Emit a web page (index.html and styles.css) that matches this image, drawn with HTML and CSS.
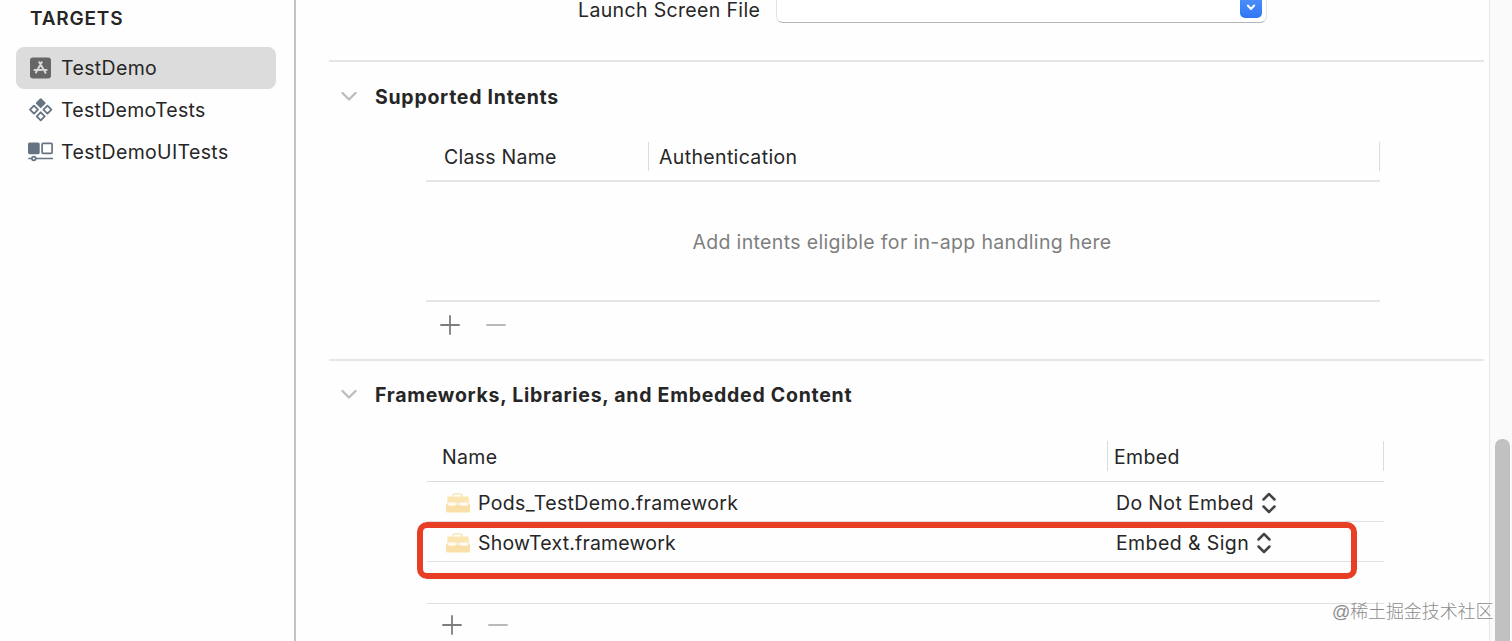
FILE: index.html
```html
<!DOCTYPE html>
<html lang="en">
<head>
    <meta charset="UTF-8">
    <meta name="viewport" content="width=device-width, initial-scale=1.0">
    <title>TestDemo - General</title>
    <link rel="stylesheet" href="styles.css">
</head>
<body>
    <svg class="sprites" width="0" height="0">
        <symbol id="chevron" viewBox="0 0 16 10">
            <path d="M1.5 1L8 7.5 14.5 1" fill="none" stroke="#bcbcbc" stroke-width="2.3" stroke-linecap="round" stroke-linejoin="round"/>
        </symbol>
        <symbol id="plus" viewBox="0 0 20 20">
            <path d="M1 10h18M10 1v18" fill="none" stroke="#7d7d7d" stroke-width="1.8" stroke-linecap="round"/>
        </symbol>
        <symbol id="minus" viewBox="0 0 20 20">
            <path d="M1 10h18" fill="none" stroke="#b9b9b9" stroke-width="1.8" stroke-linecap="round"/>
        </symbol>
        <symbol id="updown" viewBox="0 0 14 22">
            <path d="M1.5 7.5L7 2l5.5 5.5M1.5 14.5L7 20l5.5-5.5" fill="none" stroke="#444" stroke-width="2.5" stroke-linecap="round" stroke-linejoin="round"/>
        </symbol>
        <symbol id="toolbox" viewBox="0 0 24 20">
            <path d="M7 4V2.4Q7 1 8.4 1h6.2Q16 1 16 2.4V4" fill="none" stroke="#f9e6b8" stroke-width="1.6"/>
            <path d="M1.5 3.5h21L23 11.5H1z" fill="#fbe6b1"/>
            <path d="M0 11h24v7q0 1.5-1.5 1.5h-21Q0 19.5 0 18z" fill="#f9e0a8"/>
            <path d="M1 11h22" stroke="#fdf3d9" stroke-width="1.6"/>
            <path d="M3.5 11h5M15.5 11h5" stroke="#fffaf0" stroke-width="3.6" stroke-linecap="round"/>
        </symbol>
    </svg>

    <div class="window">
        <aside class="sidebar">
            <h2 class="sidebar-title">TARGETS</h2>
            <ul class="targets">
                <li class="target selected">
                    <svg width="26" height="24" viewBox="0 0 26 24">
                        <rect x="3" y="1.500" width="21" height="21" rx="3" fill="#666"/>
                        <path d="M14.7 6.2L9 16.4M12.3 6.2l6.2 10.6M7.500 14h7.2M17.7 14h1.900" fill="none" stroke="#d8d8d8" stroke-width="2" stroke-linecap="round"/>
                    </svg>
                    <span>TestDemo</span>
                </li>
                <li class="target">
                    <svg width="26" height="24" viewBox="0 0 26 24">
                        <g fill="none" stroke="#667382" stroke-width="1.8" stroke-linejoin="round">
                            <path d="M13.7 1.2l4 4-4 4-4-4z" fill="#667382"/>
                            <path d="M7 7.7l4 4-4 4-4-4z"/>
                            <path d="M20.4 7.7l4 4-4 4-4-4z"/>
                            <path d="M13.7 14.3l4 4-4 4-4-4z"/>
                        </g>
                    </svg>
                    <span class="name-tests">TestDemoTests</span>
                </li>
                <li class="target">
                    <svg width="26" height="24" viewBox="0 0 26 24">
                        <rect x="1" y="2.5" width="11.7" height="11.7" rx="1.6" fill="#667382"/>
                        <g fill="none" stroke="#667382" stroke-width="1.7">
                            <rect x="15.1" y="3.3" width="10" height="10" rx="1"/>
                            <path d="M1.3 18.5h3.3M9 18.5h17"/>
                            <circle cx="6.8" cy="18.5" r="1.9"/>
                        </g>
                    </svg>
                    <span>TestDemoUITests</span>
                </li>
            </ul>
        </aside>

        <main class="editor">
            <div class="setting">
                <label class="setting-label">Launch Screen File</label>
                <div class="combo">
                    <span class="combo-button">
                        <svg width="10" height="7" viewBox="0 0 10 7"><path d="M1.8 1.5L5 5l3.2-3.5" fill="none" stroke="#fff" stroke-width="1.9" stroke-linecap="round" stroke-linejoin="round"/></svg>
                    </span>
                </div>
            </div>

            <section class="section intents">
                <h3 class="section-title">
                    <svg width="16" height="10"><use href="#chevron"/></svg>
                    <span>Supported Intents</span>
                </h3>
                <div class="table">
                    <div class="table-head">
                        <span class="col-class">Class Name</span>
                        <span class="col-auth">Authentication</span>
                    </div>
                    <div class="table-empty">Add intents eligible for in-app handling here</div>
                    <div class="table-actions">
                        <svg width="20" height="20"><use href="#plus"/></svg>
                        <svg width="20" height="20"><use href="#minus"/></svg>
                    </div>
                </div>
            </section>

            <section class="section frameworks">
                <h3 class="section-title">
                    <svg width="16" height="10"><use href="#chevron"/></svg>
                    <span>Frameworks, Libraries, and Embedded Content</span>
                </h3>
                <div class="table">
                    <div class="table-head">
                        <span class="col-name">Name</span>
                        <span class="col-embed">Embed</span>
                    </div>
                    <div class="table-row">
                        <span class="framework">
                            <svg width="24" height="20"><use href="#toolbox"/></svg>
                            <span>Pods_TestDemo.framework</span>
                        </span>
                        <span class="embed">
                            <span>Do Not Embed</span>
                            <svg width="14" height="22"><use href="#updown"/></svg>
                        </span>
                    </div>
                    <div class="table-row">
                        <span class="framework">
                            <svg width="24" height="20"><use href="#toolbox"/></svg>
                            <span class="name-showtext">ShowText.framework</span>
                        </span>
                        <span class="embed">
                            <span class="embed-sign">Embed &amp; Sign</span>
                            <svg width="14" height="22"><use href="#updown"/></svg>
                        </span>
                        <div class="marker"></div>
                    </div>
                    <div class="table-spacer"></div>
                    <div class="table-actions">
                        <svg width="20" height="20"><use href="#plus"/></svg>
                        <svg width="20" height="20"><use href="#minus"/></svg>
                    </div>
                </div>
            </section>
        </main>

        <div class="scrollbar">
            <div class="scrollbar-thumb"></div>
        </div>
        <div class="watermark">@稀土掘金技术社区</div>
    </div>
</body>
</html>
```
FILE: styles.css
```css
* {
    box-sizing: border-box;
}

body {
    margin: 0;
    overflow: hidden;
    background: #fefefe;
    color: #262626;
    font-family: Inter, "Liberation Sans", sans-serif;
    font-size: 19.5px;
    line-height: 24px;
    letter-spacing: 0.35px;
    white-space: nowrap;
}

svg {
    display: block;
    flex: none;
}

.window {
    position: relative;
    display: flex;
    height: 641px;
    overflow: hidden;
}

/* sidebar */
.sidebar {
    width: 296px;
    padding: 7px 18px 0 16px;
    border-right: 2px solid #c4c4c4;
    flex: none;
}

.sidebar-title {
    margin: 0 0 16px 14px;
    font-size: 19px;
    font-weight: 600;
    line-height: 24px;
    letter-spacing: 0.8px;
}

.targets {
    margin: 0;
    padding: 0;
    list-style: none;
}

.target {
    display: flex;
    align-items: center;
    gap: 8px;
    height: 42px;
    padding: 0 0 1px 11px;
    border-radius: 8px;
}

.target.selected {
    background: #dcdcdc;
}

.name-tests {
    letter-spacing: 0.27px;
}

/* editor */
.editor {
    flex: 1;
    min-width: 0;
    padding: 0 5px 0 33px;
}

.setting {
    display: flex;
    height: 60px;
    padding-left: 249px;
}

.setting-label {
    width: 198px;
    line-height: 20px;
}

.combo {
    display: flex;
    justify-content: flex-end;
    align-items: flex-end;
    width: 491px;
    height: 23px;
    padding: 0 4px 4px 0;
    border: 1px solid #e2e2e2;
    border-top: 0;
    border-bottom-color: #b5b5b5;
    border-radius: 0 0 7px 7px;
    background: #fff;
}

.combo-button {
    display: flex;
    justify-content: center;
    align-items: flex-end;
    width: 22px;
    height: 18px;
    padding-bottom: 7px;
    border-radius: 0 0 5px 5px;
    background: linear-gradient(#4a8df8, #2f76f6);
}

.section {
    border-top: 2px solid #e6e6e6;
}

.intents {
    height: 299px;
}

.section-title {
    display: flex;
    align-items: center;
    gap: 18px;
    height: 70px;
    margin: 0;
    padding: 0 0 1px 12px;
    font-size: 19.5px;
    font-weight: 700;
    letter-spacing: 0.73px;
}

.table-head {
    display: flex;
    align-items: center;
}

.table-head span {
    display: flex;
    align-items: center;
    border-right: 1px solid #dcdcdc;
}

.intents .table {
    width: 954px;
    margin-left: 97px;
}

.intents .table-head {
    height: 50px;
    border-bottom: 2px solid #e6e6e6;
}

.intents .table-head span {
    height: 29px;
    padding-top: 2px;
}

.intents .col-class {
    width: 223px;
    padding-left: 18px;
    letter-spacing: 0.25px;
}

.intents .col-auth {
    flex: 1;
    padding-left: 10px;
}

.table-empty {
    display: flex;
    justify-content: center;
    align-items: center;
    height: 120px;
    padding: 2px 2px 0 0;
    border-bottom: 2px solid #e6e6e6;
    color: #7e7e7e;
}

.table-actions {
    display: flex;
    align-items: center;
    gap: 26px;
    height: 46px;
    padding-left: 14px;
}

.frameworks .section-title {
    padding-bottom: 2px;
}

.frameworks .table {
    width: 957px;
    margin-left: 98px;
}

.frameworks .table-head {
    height: 51px;
    border-bottom: 1px solid #dcdcdc;
}

.frameworks .table-head span {
    height: 30px;
    padding-top: 2px;
}

.frameworks .col-name {
    width: 681px;
    padding-left: 15px;
}

.frameworks .col-embed {
    flex: 1;
    padding-left: 6px;
}

.frameworks .table-actions {
    height: 42px;
    padding-left: 15px;
}

.table-row {
    position: relative;
    display: flex;
    align-items: center;
    height: 40px;
    padding-top: 2px;
    border-bottom: 1px solid #e0e0e0;
}

.framework,
.embed {
    display: flex;
    align-items: center;
    gap: 8px;
}

.framework {
    width: 689px;
    padding-left: 19px;
}

.name-showtext {
    letter-spacing: 0.18px;
}

.embed-sign {
    letter-spacing: 0.4px;
}

/* red frame drawn round the embedded framework */
.marker {
    position: absolute;
    top: 0;
    left: -10px;
    width: 940px;
    height: 57px;
    border: 6px solid #e83e25;
    border-radius: 10px;
}

.table-spacer {
    height: 42px;
    border-bottom: 1px solid #e0e0e0;
}

/* scrollbar */
.scrollbar {
    width: 23px;
    padding: 439px 2px 0 5px;
    border-left: 1px solid #e6e6e6;
    background: #fafafa;
    flex: none;
}

.scrollbar-thumb {
    height: 220px;
    border-radius: 7px;
    background: #c1c1c1;
}

.watermark {
    position: absolute;
    top: 600px;
    left: 1332px;
    color: #8c8c8c;
    font-family: "Liberation Sans", "Noto Sans CJK SC", sans-serif;
    font-size: 18px;
    font-weight: 300;
    letter-spacing: -0.1px;
}
```
